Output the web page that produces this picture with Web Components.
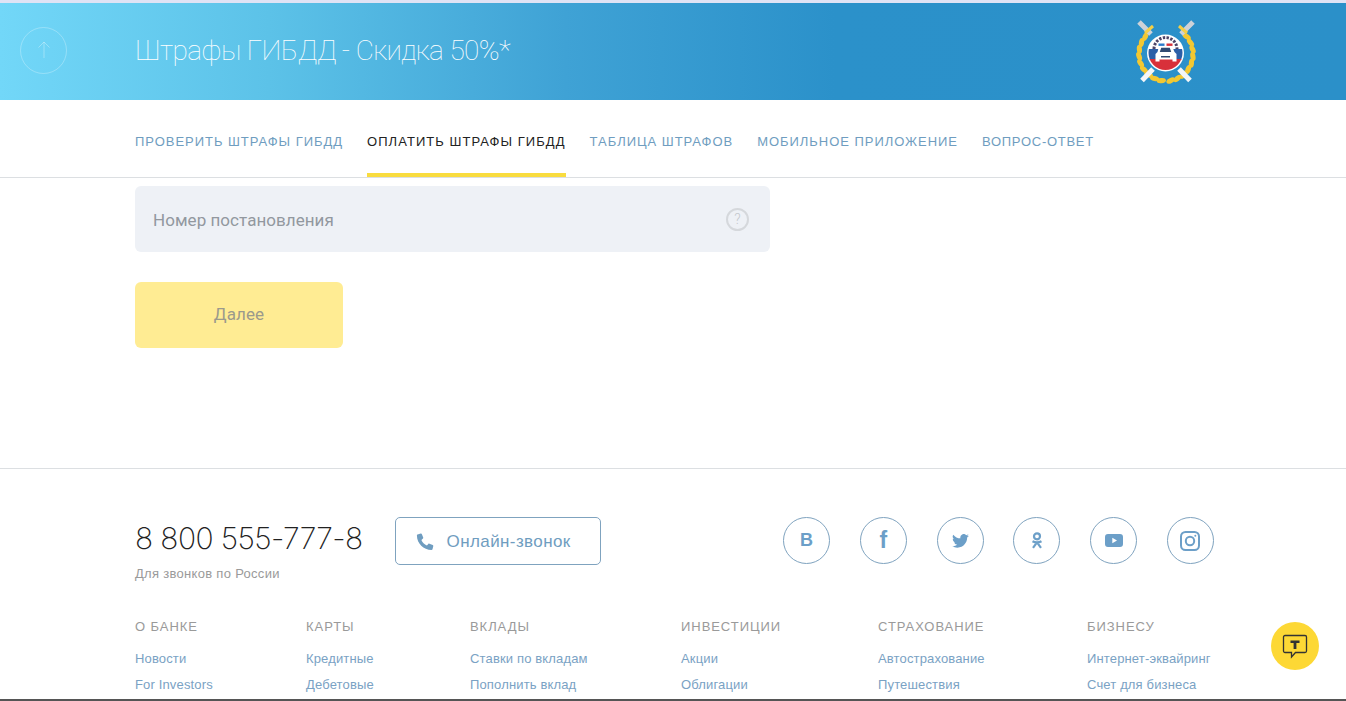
<!DOCTYPE html>
<html lang="ru">
<head>
<meta charset="utf-8">
<title>Штрафы ГИБДД</title>
<style>
  html, body { margin: 0; height: 100%; overflow: hidden; background: #fff; }
  body { display: flex; flex-direction: column; height: 701px; font-family: "Liberation Sans", Arial, sans-serif; }
</style>
</head>
<body>
<fines-header title="Штрафы ГИБДД - Скидка 50%*"></fines-header>
<fines-tabs></fines-tabs>
<fines-form></fines-form>
<site-footer></site-footer>
<chat-button></chat-button>

<script>
class FinesHeader extends HTMLElement {
  constructor() {
    super();
    this.attachShadow({ mode: 'open' });
  }

  connectedCallback() {
    const title = this.getAttribute('title') || '';
    const leaves = [];
    for (let a = 100; a <= 232; a += 15) {
      [a, 540 - a].forEach((deg) => {
        const r = (deg * Math.PI) / 180;
        const x = (32 + 27 * Math.cos(r)).toFixed(1);
        const y = (34 + 27 * Math.sin(r)).toFixed(1);
        leaves.push(`<ellipse cx="${x}" cy="${y}" rx="4.600" ry="2.600" transform="rotate(${deg + 75} ${x} ${y})"/>`);
      });
    }
    this.shadowRoot.innerHTML = `
      <style>
        :host {
          display: flex;
          align-items: center;
          flex: none;
          height: 97px;
          border-top: 3px solid #dfe3f5;
          background: linear-gradient(90deg, #72d7f8 0%, #5cc2e8 20%, #3fa2d5 42%, #2b91ca 62%, #2b90c9 100%);
          position: relative;
        }
        .up {
          flex: none;
          width: 45px;
          height: 45px;
          margin: -3px 0 0 20px;
          border: 1px solid rgba(255, 255, 255, .28);
          border-radius: 50%;
          display: flex;
          align-items: center;
          justify-content: center;
        }
        h1 {
          margin: -3px 0 0 68px;
          font: 150 28px "Roboto", "Liberation Sans", sans-serif;
          letter-spacing: -.6px;
          color: #fff;
          white-space: nowrap;
        }
        .crest {
          position: absolute;
          left: 1134px;
          top: 17px;
        }
      </style>
      <div class="up">
        <svg width="16" height="18" viewBox="0 0 16 18" fill="none" stroke="rgba(255,255,255,.32)" stroke-width="1">
          <path d="M8 17V1M2.500 6.500 8 1l5.500 5.500"/>
        </svg>
      </div>
      <h1>${title}</h1>
      <svg class="crest" width="64" height="64" viewBox="0 0 64 64">
        <g fill="#f3c832">${leaves.join('')}</g>
        <path d="M45 49 56 60.500M19 49 8 60.500" stroke="#f4f6f8" stroke-width="5"/>
        <path d="M5 2 17 14M59 2 47 14" stroke="#cdd2d8" stroke-width="5"/>
        <path d="M11 13 19 6M53 13 45 6" stroke="#f5cf45" stroke-width="3"/>
        <circle cx="31.500" cy="33" r="18.500" fill="#fff"/>
        <clipPath id="disc"><circle cx="31.500" cy="33" r="17"/></clipPath>
        <g clip-path="url(#disc)">
          <rect x="14" y="15" width="36" height="15" fill="#fff"/>
          <rect x="14" y="29" width="36" height="11" fill="#2c5fa8"/>
          <rect x="14" y="39" width="36" height="12" fill="#d8303a"/>
          <path d="M20 29a11.500 11.500 0 0 1 23 0" fill="none" stroke="#4d4467" stroke-width="3" stroke-dasharray="2.400 1.400"/>
        </g>
        <rect x="24.500" y="23.500" width="6" height="2.400" fill="#2c7ac9"/>
        <rect x="32.500" y="23.500" width="6" height="2.400" fill="#d8303a"/>
        <path d="M25 26h13l2.500 6 2 2v7.500h-4V39.500h-13v2h-4V34l2-2z" fill="#fff"/>
        <path d="M25.800 32l1.400-4.200h8.600l1.400 4.200z" fill="#2f4a72"/>
        <rect x="27" y="36" width="9" height="1.500" fill="#2f4a72"/>
      </svg>
    `;
  }
}

class FinesTabs extends HTMLElement {
  constructor() {
    super();
    this.attachShadow({ mode: 'open' });
  }

  connectedCallback() {
    const tabs = ['Проверить штрафы ГИБДД', 'Оплатить штрафы ГИБДД', 'Таблица штрафов', 'Мобильное приложение', 'Вопрос-ответ'];
    this.shadowRoot.innerHTML = `
      <style>
        :host {
          display: flex;
          flex: none;
          height: 77px;
          gap: 24px;
          padding-left: 135px;
          border-bottom: 1px solid #dcdfe2;
        }
        a {
          display: flex;
          align-items: center;
          box-sizing: border-box;
          height: 77px;
          padding-top: 9px;
          border-bottom: 4px solid transparent;
          font-size: 13px;
          letter-spacing: .97px;
          text-transform: uppercase;
          color: #6f9dc0;
          white-space: nowrap;
        }
        a:last-child { letter-spacing: .72px; }
        a.active {
          color: #222;
          letter-spacing: 1.05px;
          border-bottom-color: #f9dc3f;
        }
      </style>
      ${tabs.map((t, i) => `<a class="${i === 1 ? 'active' : ''}">${t}</a>`).join('')}
    `;
  }
}

class FinesForm extends HTMLElement {
  constructor() {
    super();
    this.attachShadow({ mode: 'open' });
  }

  connectedCallback() {
    this.shadowRoot.innerHTML = `
      <style>
        :host {
          display: flex;
          flex-direction: column;
          align-items: flex-start;
          flex: none;
          gap: 30px;
          padding: 8px 0 120px 135px;
          font: 400 17px "Roboto", sans-serif;
        }
        .field {
          box-sizing: border-box;
          display: flex;
          align-items: center;
          justify-content: space-between;
          width: 635px;
          height: 66px;
          padding: 0 21px 0 18px;
          border-radius: 6px;
          background: #eef1f6;
          color: #92989f;
          letter-spacing: .05px;
        }
        .field span:first-child { padding-top: 2px; }
        .hint {
          box-sizing: border-box;
          width: 23px;
          height: 23px;
          border: 2px solid #d5d8dc;
          border-radius: 50%;
          display: flex;
          align-items: center;
          justify-content: center;
          font-size: 14px;
          font-weight: 300;
          color: #c4c8cd;
        }
        .next {
          box-sizing: border-box;
          display: flex;
          align-items: center;
          justify-content: center;
          width: 208px;
          height: 66px;
          padding-bottom: 2px;
          border-radius: 6px;
          background: #ffec93;
          color: #9b9a8c;
          letter-spacing: .1px;
        }
      </style>
      <div class="field"><span>Номер постановления</span><span class="hint">?</span></div>
      <div class="next">Далее</div>
    `;
  }
}

class SocialLink extends HTMLElement {
  constructor() {
    super();
    this.attachShadow({ mode: 'open' });
    this.shadowRoot.innerHTML = `
      <style>
        :host {
          box-sizing: border-box;
          display: flex;
          align-items: center;
          justify-content: center;
          width: 47px;
          height: 47px;
          border: 1px solid #7fa3bf;
          border-radius: 50%;
          color: #6c9fc8;
        }
      </style>
      <slot></slot>
    `;
  }
}

class FooterColumn extends HTMLElement {
  constructor() {
    super();
    this.attachShadow({ mode: 'open' });
  }

  connectedCallback() {
    const links = (this.getAttribute('links') || '').split('|');
    this.shadowRoot.innerHTML = `
      <style>
        :host { display: flex; flex-direction: column; font-size: 13px; }
        h3 {
          margin: 0 0 17px;
          font-size: 13px;
          font-weight: 400;
          line-height: 15px;
          letter-spacing: .95px;
          text-transform: uppercase;
          color: #9a9a9a;
        }
        a {
          display: block;
          height: 26px;
          line-height: 16px;
          letter-spacing: .15px;
          color: #7aa2c4;
          white-space: nowrap;
        }
      </style>
      <h3>${this.getAttribute('heading')}</h3>
      ${links.map((l) => `<a>${l}</a>`).join('')}
    `;
  }
}

class SiteFooter extends HTMLElement {
  constructor() {
    super();
    this.attachShadow({ mode: 'open' });
  }

  connectedCallback() {
    this.shadowRoot.innerHTML = `
      <style>
        :host {
          display: block;
          flex: 1;
          min-height: 0;
          overflow: hidden;
          border-top: 1px solid #dcdfe2;
          border-bottom: 2px solid #555;
          padding: 48px 132px 0 135px;
        }
        .top { display: flex; align-items: flex-start; height: 102px; }
        .phone {
          font: 200 30px/42px "Inter", sans-serif;
          letter-spacing: -.6px;
          color: #222;
          white-space: nowrap;
        }
        .note { margin-top: 7px; font-size: 13px; line-height: 16px; letter-spacing: .3px; color: #9a9a9a; }
        .call {
          box-sizing: border-box;
          display: flex;
          align-items: center;
          gap: 13px;
          width: 206px;
          height: 48px;
          margin-left: 32px;
          padding: 1px 0 0 20px;
          border: 1px solid #7fa3bf;
          border-radius: 5px;
          font-size: 17px;
          letter-spacing: .4px;
          color: #6f9dc0;
          white-space: nowrap;
        }
        .socials {
          display: flex;
          justify-content: space-between;
          width: 431px;
          margin-left: auto;
        }
        .cols {
          display: grid;
          grid-template-columns: 171px 164px 211px 197px 209px auto;
        }
        b { font: 700 18px "Liberation Sans", sans-serif; }
        .fb { font-size: 23px; }
      </style>
      <div class="top">
        <div>
          <div class="phone">8 800 555-777-8</div>
          <div class="note">Для звонков по России</div>
        </div>
        <div class="call">
          <svg width="18" height="18" viewBox="0 0 18 18"><path fill="currentColor" d="M1.500 1.500 4.800.6c.5-.1.9.1 1.100.6l1.300 3.300c.2.400.1.800-.2 1.100L5.400 7c.9 2.400 3 4.500 5.500 5.500l1.400-1.600c.3-.3.700-.4 1.100-.2l3.300 1.300c.5.200.7.600.6 1.100l-.8 3.200c-.1.500-.5.700-1 .7C7.500 17 1 10.500.9 2.500c0-.5.200-.9.600-1z"/></svg>
          Онлайн-звонок
        </div>
        <div class="socials">
          <social-link><b>В</b></social-link>
          <social-link><b class="fb">f</b></social-link>
          <social-link>
            <svg width="17" height="14" viewBox="0 0 24 20"><path fill="currentColor" d="M24 2.400c-.9.400-1.800.7-2.800.8 1-.6 1.800-1.600 2.200-2.700-1 .6-2 1-3.100 1.200A4.900 4.900 0 0 0 11.900 6.200 14 14 0 0 1 1.700.9a4.900 4.900 0 0 0 1.500 6.600c-.8 0-1.600-.2-2.200-.6v.1a4.900 4.900 0 0 0 3.900 4.800c-.7.200-1.500.2-2.200.1a4.900 4.900 0 0 0 4.600 3.400A9.900 9.900 0 0 1 0 17.300 14 14 0 0 0 7.500 19.500c9.100 0 14-7.500 14-14v-.6c1-.7 1.800-1.600 2.500-2.500z"/></svg>
          </social-link>
          <social-link>
            <svg width="12" height="17" viewBox="0 0 12 17" fill="none" stroke="currentColor" stroke-width="2.200"><circle cx="6" cy="4.300" r="3"/><path d="M1.500 9.200c2.800 1.600 6.200 1.600 9 0M6 10.400 2 15.800M6 10.400l4 5.400"/></svg>
          </social-link>
          <social-link>
            <svg width="18" height="13" viewBox="0 0 18 13"><path fill="currentColor" fill-rule="evenodd" d="M3 0h12a3 3 0 0 1 3 3v7a3 3 0 0 1-3 3H3a3 3 0 0 1-3-3V3a3 3 0 0 1 3-3zm4.300 3.800v5.400l4.700-2.700z"/></svg>
          </social-link>
          <social-link>
            <svg width="20" height="20" viewBox="0 0 20 20" fill="none" stroke="currentColor" stroke-width="2"><rect x="1" y="1" width="18" height="18" rx="4.500"/><circle cx="10" cy="10" r="4.200"/><circle cx="15.300" cy="4.700" r="1" fill="currentColor" stroke="none"/></svg>
          </social-link>
        </div>
      </div>
      <div class="cols">
        <footer-column heading="О банке" links="Новости|For Investors"></footer-column>
        <footer-column heading="Карты" links="Кредитные|Дебетовые"></footer-column>
        <footer-column heading="Вклады" links="Ставки по вкладам|Пополнить вклад"></footer-column>
        <footer-column heading="Инвестиции" links="Акции|Облигации"></footer-column>
        <footer-column heading="Страхование" links="Автострахование|Путешествия"></footer-column>
        <footer-column heading="Бизнесу" links="Интернет-эквайринг|Счет для бизнеса"></footer-column>
      </div>
    `;
  }
}

class ChatButton extends HTMLElement {
  constructor() {
    super();
    this.attachShadow({ mode: 'open' });
    this.shadowRoot.innerHTML = `
      <style>
        :host {
          position: fixed;
          left: 1271px;
          top: 622px;
          width: 48px;
          height: 48px;
          border-radius: 50%;
          background: #fdd835;
          display: flex;
          align-items: center;
          justify-content: center;
        }
      </style>
      <svg width="26" height="26" viewBox="0 0 26 26">
        <path d="M3 2.500h20a1.500 1.500 0 0 1 1.500 1.500v14a1.500 1.500 0 0 1-1.500 1.500h-9.500L9.500 24v-4.500H3A1.500 1.500 0 0 1 1.500 18V4A1.500 1.500 0 0 1 3 2.500z" fill="none" stroke="#333" stroke-width="1.300"/>
        <path d="M8.500 7.500h9v2.600h-3.100v6h-2.800v-6H8.500z" fill="#333"/>
      </svg>
    `;
  }
}

customElements.define('fines-header', FinesHeader);
customElements.define('fines-tabs', FinesTabs);
customElements.define('fines-form', FinesForm);
customElements.define('social-link', SocialLink);
customElements.define('footer-column', FooterColumn);
customElements.define('site-footer', SiteFooter);
customElements.define('chat-button', ChatButton);
</script>
</body>
</html>
